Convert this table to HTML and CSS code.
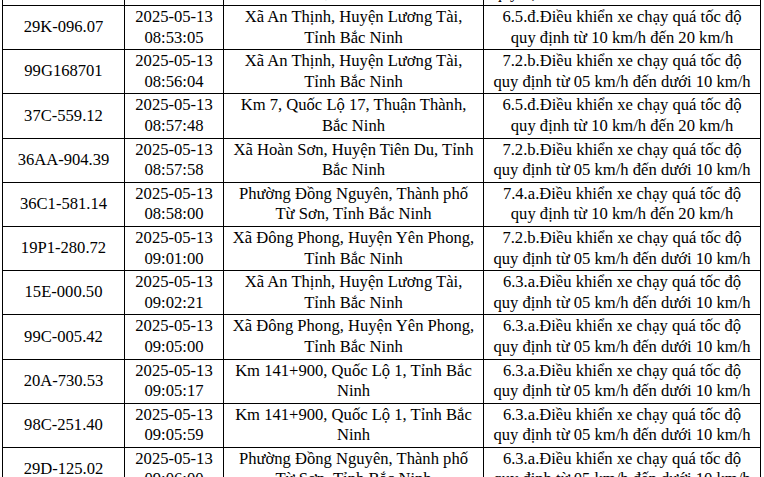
FILE: index.html
```html
<!DOCTYPE html>
<html lang="vi">
<head>
<meta charset="utf-8">
<title>Danh sách vi phạm</title>
<link rel="stylesheet" href="styles.css">
</head>
<body>
<table class="vp">
<colgroup>
<col class="c1"><col class="c2"><col class="c3"><col class="c4">
</colgroup>
<tbody>
<tr><td>36C1-581.10</td><td>2025-05-13<br>08:52:14</td><td>Phường Đồng Nguyên, Thành phố<br>Từ Sơn, Tỉnh Bắc Ninh</td><td>6.3.a.Điều khiển xe chạy quá tốc độ<br>quy định từ 05 km/h đến dưới 10 km/h</td></tr>
<tr><td>29K-096.07</td><td>2025-05-13<br>08:53:05</td><td>Xã An Thịnh, Huyện Lương Tài,<br>Tỉnh Bắc Ninh</td><td>6.5.đ.Điều khiển xe chạy quá tốc độ<br>quy định từ 10 km/h đến 20 km/h</td></tr>
<tr><td>99G168701</td><td>2025-05-13<br>08:56:04</td><td>Xã An Thịnh, Huyện Lương Tài,<br>Tỉnh Bắc Ninh</td><td>7.2.b.Điều khiển xe chạy quá tốc độ<br>quy định từ 05 km/h đến dưới 10 km/h</td></tr>
<tr><td>37C-559.12</td><td>2025-05-13<br>08:57:48</td><td>Km 7, Quốc Lộ 17, Thuận Thành,<br>Bắc Ninh</td><td>6.5.đ.Điều khiển xe chạy quá tốc độ<br>quy định từ 10 km/h đến 20 km/h</td></tr>
<tr><td>36AA-904.39</td><td>2025-05-13<br>08:57:58</td><td>Xã Hoàn Sơn, Huyện Tiên Du, Tỉnh<br>Bắc Ninh</td><td>7.2.b.Điều khiển xe chạy quá tốc độ<br>quy định từ 05 km/h đến dưới 10 km/h</td></tr>
<tr><td>36C1-581.14</td><td>2025-05-13<br>08:58:00</td><td>Phường Đồng Nguyên, Thành phố<br>Từ Sơn, Tỉnh Bắc Ninh</td><td>7.4.a.Điều khiển xe chạy quá tốc độ<br>quy định từ 10 km/h đến 20 km/h</td></tr>
<tr><td>19P1-280.72</td><td>2025-05-13<br>09:01:00</td><td>Xã Đông Phong, Huyện Yên Phong,<br>Tỉnh Bắc Ninh</td><td>7.2.b.Điều khiển xe chạy quá tốc độ<br>quy định từ 05 km/h đến dưới 10 km/h</td></tr>
<tr><td>15E-000.50</td><td>2025-05-13<br>09:02:21</td><td>Xã An Thịnh, Huyện Lương Tài,<br>Tỉnh Bắc Ninh</td><td>6.3.a.Điều khiển xe chạy quá tốc độ<br>quy định từ 05 km/h đến dưới 10 km/h</td></tr>
<tr><td>99C-005.42</td><td>2025-05-13<br>09:05:00</td><td>Xã Đông Phong, Huyện Yên Phong,<br>Tỉnh Bắc Ninh</td><td>6.3.a.Điều khiển xe chạy quá tốc độ<br>quy định từ 05 km/h đến dưới 10 km/h</td></tr>
<tr><td>20A-730.53</td><td>2025-05-13<br>09:05:17</td><td>Km 141+900, Quốc Lộ 1, Tỉnh Bắc<br>Ninh</td><td>6.3.a.Điều khiển xe chạy quá tốc độ<br>quy định từ 05 km/h đến dưới 10 km/h</td></tr>
<tr><td>98C-251.40</td><td>2025-05-13<br>09:05:59</td><td>Km 141+900, Quốc Lộ 1, Tỉnh Bắc<br>Ninh</td><td>6.3.a.Điều khiển xe chạy quá tốc độ<br>quy định từ 05 km/h đến dưới 10 km/h</td></tr>
<tr><td>29D-125.02</td><td>2025-05-13<br>09:06:00</td><td>Phường Đồng Nguyên, Thành phố<br>Từ Sơn, Tỉnh Bắc Ninh</td><td>6.3.a.Điều khiển xe chạy quá tốc độ<br>quy định từ 05 km/h đến dưới 10 km/h</td></tr>
</tbody>
</table>
</body>
</html>
```
FILE: styles.css
```css
html, body {
  margin: 0;
  padding: 0;
  background: #fff;
  overflow: hidden;
}
.vp {
  border-collapse: collapse;
  table-layout: fixed;
  width: 758px;
  margin: -39.2px 0 0 2px;
  font-family: "Liberation Serif", "Times New Roman", serif;
  font-size: 16.6px;
  line-height: 20.6px;
  color: #000;
}
.c1 { width: 122px; }
.c2 { width: 99px; }
.c3 { width: 260px; }
.c4 { width: 277px; }
.vp td {
  border: 1px solid #000;
  padding: 1px 0;
  text-align: center;
  vertical-align: middle;
  white-space: nowrap;
  overflow: hidden;
}
```
